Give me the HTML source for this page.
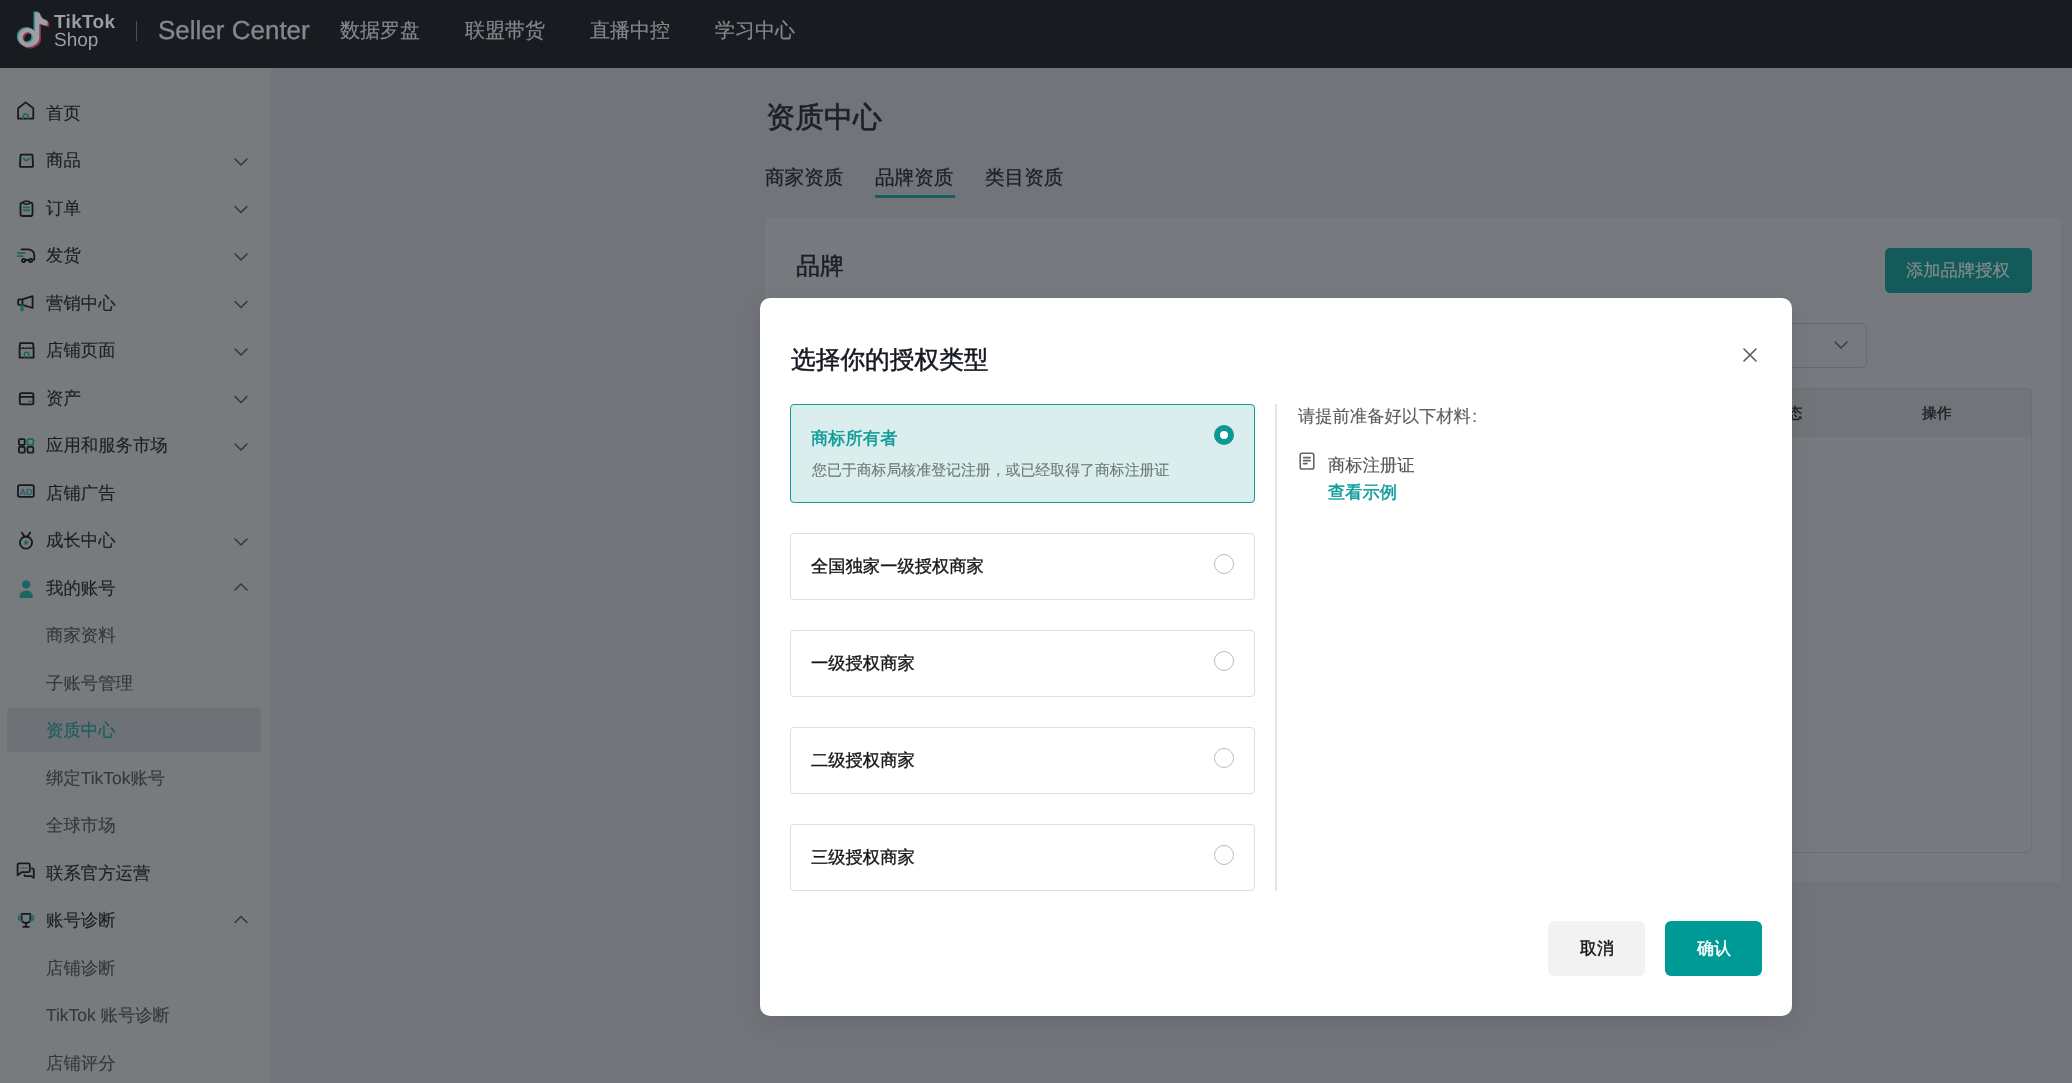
<!DOCTYPE html>
<html><head><meta charset="utf-8">
<style>
*{margin:0;padding:0;box-sizing:border-box}
html,body{width:2072px;height:1083px;overflow:hidden}
body{font-family:"Liberation Sans",sans-serif;background:#717479;position:relative;will-change:transform;text-rendering:geometricPrecision}
.a{position:absolute;white-space:nowrap}
.nav{font-size:20px;color:#84878c;top:19px;line-height:24px;-webkit-text-stroke:0.2px #84878c}
.it{left:46px;font-size:17.4px;line-height:20px;color:#1b1e22;-webkit-text-stroke:0.12px #1b1e22}
.sub{color:#34373c;-webkit-text-stroke:0.1px #34373c}
.opt{position:absolute;left:790px;width:465px;height:67px;border:1px solid #dedede;border-radius:4px;background:#fff}
.ot{position:absolute;left:811px;font-size:17.3px;line-height:20px;color:#161616;-webkit-text-stroke:0.35px #161616}
.radio{position:absolute;left:1214px;width:20px;height:20px;border-radius:50%;border:1px solid #bcbcbc}
</style></head><body>
<!-- header -->
<div class="a" style="left:0;top:0;width:2072px;height:68px;background:#181b1f"></div>
<svg class="a" style="left:0;top:0" width="130" height="68" viewBox="0 0 130 68">
  <defs><g id="tk">
    <circle cx="27.8" cy="37.6" r="7.3" fill="none" stroke-width="4.5"/>
    <path d="M35,12.6 H39.4 Q40.6,19.6 47.6,20.8 V25.6 Q42.6,25.4 39.4,23.4 V37.6 A11.6,9.55 0 0 1 27.8,47.15 V42.6 A5,5 0 0 0 35,37.6 Z" stroke="none"/>
  </g></defs>
  <g fill="#3b8f90" stroke="#3b8f90" transform="translate(-1.5,-1.1)"><use href="#tk"/></g>
  <g fill="#8e3049" stroke="#8e3049" transform="translate(1.6,1.3)"><use href="#tk"/></g>
  <g fill="#9c9fa3" stroke="#9c9fa3"><use href="#tk"/></g>
</svg>
<div class="a" style="left:54px;top:12px;font-size:19px;line-height:22px;font-weight:700;color:#9b9ea3;letter-spacing:0.3px">TikTok</div>
<div class="a" style="left:54px;top:30px;font-size:19px;line-height:22px;color:#9b9ea3">Shop</div>
<div class="a" style="left:136px;top:21px;width:1px;height:20px;background:#4d5055"></div>
<div class="a" style="left:158px;top:14px;font-size:26px;line-height:32px;color:#84878c;-webkit-text-stroke:0.35px #84878c">Seller Center</div>
<div class="a nav" style="left:340px">数据罗盘</div>
<div class="a nav" style="left:465px">联盟带货</div>
<div class="a nav" style="left:590px">直播中控</div>
<div class="a nav" style="left:715px">学习中心</div>

<!-- sidebar -->
<div class="a" style="left:0;top:68px;width:271px;height:1015px;background:#787b7d"></div>
<div class="a" style="left:7px;top:708px;width:254px;height:44px;background:#6e7176;border-radius:4px"></div>
<svg class="a" style="left:0;top:0" width="271" height="1083" viewBox="0 0 271 1083" fill="none" stroke-linecap="round" stroke-linejoin="round">
  <g stroke="#16191d" stroke-width="1.8">
    <!-- house -->
    <path d="M18.1,109 Q18.1,108.2 18.7,107.7 L25.7,102.4 L32.7,107.7 Q33.3,108.2 33.3,109 V118.7 H18.1 Z"/>
    <!-- bag -->
    <path d="M21.2,154.7 H31.8 Q32.4,154.7 32.5,155.4 L33,166.2 Q33,166.9 32.3,166.9 H20.7 Q20,166.9 20,166.2 L20.5,155.4 Q20.6,154.7 21.2,154.7 Z"/>
    <!-- clipboard -->
    <rect x="20.5" y="202.6" width="12" height="13.4" rx="2"/><rect x="23.6" y="201.2" width="5.8" height="2.8" rx="1.2" fill="#787b7d" stroke-width="1.5"/>
    <!-- truck -->
    <path d="M21.5,249.4 H28.8 Q34.3,250.5 34.3,255.5 V259.6 H32.3"/>
    <circle cx="23.6" cy="260.4" r="1.6"/><circle cx="30.6" cy="260.4" r="1.6"/>
    <path d="M25.2,260 H29"/>
    <!-- megaphone -->
    <rect x="18.2" y="299.4" width="4.2" height="5.4" rx="0.8"/><path d="M22.4,299.4 L32.6,296.2 V308 L22.4,304.8"/>
    <!-- store -->
    <path d="M20.2,343.2 H32.8 L33.6,347.6 V357.6 H19.6 V347.6 Z"/>
    <path d="M19.8,347.6 Q21.6,349.4 23.3,347.6 Q25,349.4 26.7,347.6 Q28.4,349.4 30,347.6 Q31.8,349.4 33.4,347.6" stroke-width="1.2"/>
    <!-- wallet -->
    <rect x="19.8" y="393.2" width="13.6" height="11.2" rx="1.6"/>
    <path d="M19.8,396.8 H33.4"/>
    <!-- grid -->
    <rect x="18.9" y="439.1" width="5.8" height="5.8" rx="1"/>
    <rect x="18.9" y="446.8" width="5.8" height="5.8" rx="1"/>
    <rect x="27.5" y="446.8" width="5.8" height="5.8" rx="1"/>
    <!-- AD -->
    <rect x="18" y="485.2" width="15.8" height="11.6" rx="1.6"/>
    <!-- medal -->
    <circle cx="26" cy="542.6" r="6.1"/>
    <path d="M21.8,532.6 L24.6,536.8 M30.2,532.6 L27.4,536.8"/>
    <!-- chat -->
    <path d="M19,863.4 H28.4 Q29.8,863.4 29.8,864.8 V870.8 Q29.8,872.2 28.4,872.2 H21.6 L17.6,875.4 V864.8 Q17.6,863.4 19,863.4 Z"/>
    <path d="M32,868.4 Q33.8,868.4 33.8,870 V877.8 L31.2,876.2 H25.6 Q24.6,876.2 24.4,874.8" />
    <!-- trophy -->
    <path d="M21.6,913.9 H30.4 V918.8 Q30.4,923 26,923 Q21.6,923 21.6,918.8 Z"/>
    <path d="M26,923 V926.8 M23.2,926.8 H28.8"/>
  </g>
  <g stroke="#1c6562" stroke-width="1.8">
    <path d="M23.3,118.6 V116.4 a2.4,2.4 0 0 1 4.8,0 V118.6" stroke-width="1.6"/>
    <path d="M23.6,158.4 Q26.5,162.6 29.4,158.4"/>
    <path d="M23.8,207.4 H29.2 M23.8,210.4 H29.2"/>
    <path d="M18,253.2 H24.5 M17.8,256.2 H22.6"/>
    <path d="M20.8,305 L21.6,310.6 H22.9 L22.5,305" stroke-width="1.5"/>
    <path d="M24.6,357.4 V352.6 H28.6 V357.4" stroke-width="1.5"/>
    <path d="M28.6,401.4 H31" stroke-width="1.5"/>
    <rect x="27.5" y="439.1" width="5.8" height="5.8" rx="1"/>
    <path d="M22.6,863.9 H22.7 M24.3,867.8 H24.4" stroke-width="0"/>
    <path d="M21.6,915.2 Q18.2,915.2 18.4,918 Q18.8,920.4 21.8,920.6 M30.4,915.2 Q33.8,915.2 33.6,918 Q33.2,920.4 30.2,920.6" stroke-width="1.6"/>
  </g>
  <g fill="#1c6562" stroke="none">
    <path d="M26,539.6 L26.9,541.5 L29,541.7 L27.4,543.1 L27.9,545.2 L26,544.1 L24.1,545.2 L24.6,543.1 L23,541.7 L25.1,541.5 Z"/>
    <circle cx="26.2" cy="584.4" r="4.2"/>
    <path d="M19.4,598 Q19.6,590.4 26.2,590.4 Q32.8,590.4 33,598 Z"/>
    <circle cx="21.2" cy="868" r="0.9"/><circle cx="23.7" cy="868" r="0.9"/><circle cx="26.2" cy="868" r="0.9"/>
  </g>
  <text x="25.9" y="494.6" font-family="Liberation Sans" font-weight="700" font-size="9" fill="#1c6562" text-anchor="middle" letter-spacing="-0.2">AD</text>
  <g stroke="#36393e" stroke-width="1.6">
    <path d="M235,159 L241,165 L247,159"/>
    <path d="M235,206.5 L241,212.5 L247,206.5"/>
    <path d="M235,254 L241,260 L247,254"/>
    <path d="M235,301.5 L241,307.5 L247,301.5"/>
    <path d="M235,349 L241,355 L247,349"/>
    <path d="M235,396.5 L241,402.5 L247,396.5"/>
    <path d="M235,444 L241,450 L247,444"/>
    <path d="M235,539 L241,545 L247,539"/>
    <path d="M235,590 L241,584 L247,590"/>
    <path d="M235,922.5 L241,916.5 L247,922.5"/>
  </g>
</svg>
<div class="a it" style="top:102.75px">首页</div>
<div class="a it" style="top:150.25px">商品</div>
<div class="a it" style="top:197.75px">订单</div>
<div class="a it" style="top:245.25px">发货</div>
<div class="a it" style="top:292.75px">营销中心</div>
<div class="a it" style="top:340.25px">店铺页面</div>
<div class="a it" style="top:387.75px">资产</div>
<div class="a it" style="top:435.25px">应用和服务市场</div>
<div class="a it" style="top:482.75px">店铺广告</div>
<div class="a it" style="top:530.25px">成长中心</div>
<div class="a it" style="top:577.75px">我的账号</div>
<div class="a it sub" style="top:625.25px">商家资料</div>
<div class="a it sub" style="top:672.75px">子账号管理</div>
<div class="a it sub" style="top:720.25px;color:#1b5e5e;-webkit-text-stroke:0.2px #1b5e5e">资质中心</div>
<div class="a it sub" style="top:767.75px">绑定TikTok账号</div>
<div class="a it sub" style="top:815.25px">全球市场</div>
<div class="a it" style="top:862.75px">联系官方运营</div>
<div class="a it" style="top:910.25px">账号诊断</div>
<div class="a it sub" style="top:957.75px">店铺诊断</div>
<div class="a it sub" style="top:1005.25px">TikTok 账号诊断</div>
<div class="a it sub" style="top:1052.75px">店铺评分</div>

<!-- page content -->
<div class="a" style="left:766px;top:100px;font-size:29px;line-height:36px;color:#1c1f24;-webkit-text-stroke:0.6px #1c1f24">资质中心</div>
<div class="a" style="left:765px;top:166px;font-size:19.6px;line-height:24px;color:#1c1f24;-webkit-text-stroke:0.25px #1c1f24">商家资质</div>
<div class="a" style="left:875px;top:166px;font-size:19.6px;line-height:24px;color:#1c1f24;-webkit-text-stroke:0.25px #1c1f24">品牌资质</div>
<div class="a" style="left:985px;top:166px;font-size:19.6px;line-height:24px;color:#1c1f24;-webkit-text-stroke:0.25px #1c1f24">类目资质</div>
<div class="a" style="left:875px;top:195px;width:80px;height:3px;background:#185d5f"></div>
<div class="a" style="left:765px;top:217px;width:1296px;height:665px;background:#76797d;border-radius:3px"></div>
<div class="a" style="left:796px;top:253px;font-size:24px;line-height:28px;color:#1c1f24;-webkit-text-stroke:0.5px #1c1f24">品牌</div>
<div class="a" style="left:1885px;top:248px;width:147px;height:45px;background:#135a5b;border-radius:5px"></div>
<div class="a" style="left:1906px;top:259.5px;font-size:17.3px;line-height:21px;color:#868b8c;-webkit-text-stroke:0.2px #868b8c">添加品牌授权</div>
<div class="a" style="left:1500px;top:323px;width:367px;height:45px;border:1px solid #66696d;border-radius:5px"></div>
<svg class="a" style="left:1830px;top:338px" width="22" height="14" viewBox="0 0 22 14" fill="none"><path d="M5,4 L11,10 L17,4" stroke="#3c3f44" stroke-width="1.6" stroke-linecap="round" stroke-linejoin="round"/></svg>
<div class="a" style="left:795px;top:388px;width:1237px;height:465px;border:1px solid #6c6f73;border-radius:5px"></div>
<div class="a" style="left:796px;top:389px;width:1235px;height:48px;background:#717478;border-radius:4px 4px 0 0"></div>
<div class="a" style="left:1922px;top:405px;font-size:14.8px;line-height:18px;color:#1c1f24;-webkit-text-stroke:0.4px #1c1f24">操作</div>
<div class="a" style="left:1773px;top:405px;font-size:14.8px;line-height:18px;color:#1c1f24;-webkit-text-stroke:0.4px #1c1f24">状态</div>

<!-- modal -->
<div class="a" style="left:760px;top:298px;width:1032px;height:718px;background:#fff;border-radius:10px;box-shadow:0 6px 24px rgba(0,0,0,0.09)"></div>
<div class="a" style="left:791px;top:346px;font-size:24.7px;line-height:30px;color:#161823;-webkit-text-stroke:0.5px #161823">选择你的授权类型</div>
<svg class="a" style="left:1738px;top:343px" width="24" height="24" viewBox="0 0 24 24"><path d="M6,6 L18,18 M18,6 L6,18" stroke="#5a5a5a" stroke-width="1.6" stroke-linecap="round"/></svg>

<div class="opt" style="top:404px;height:99px;border:1.5px solid #169c98;background:#d9eeed"></div>
<div class="ot" style="top:428px;color:#0e9a96;-webkit-text-stroke:0.45px #0e9a96">商标所有者</div>
<div class="a" style="left:812px;top:463px;font-size:14.9px;line-height:17px;color:#6d7777;-webkit-text-stroke:0.1px #6d7777">您已于商标局核准登记注册，或已经取得了商标注册证</div>
<div class="radio" style="top:425px;border:6.2px solid #0c9893;background:#fff"></div>

<div class="opt" style="top:533px"></div><div class="ot" style="top:556px">全国独家一级授权商家</div><div class="radio" style="top:554px"></div>
<div class="opt" style="top:630px"></div><div class="ot" style="top:653px">一级授权商家</div><div class="radio" style="top:651px"></div>
<div class="opt" style="top:727px"></div><div class="ot" style="top:750px">二级授权商家</div><div class="radio" style="top:748px"></div>
<div class="opt" style="top:824px"></div><div class="ot" style="top:847px">三级授权商家</div><div class="radio" style="top:845px"></div>

<div class="a" style="left:1275px;top:404px;width:2px;height:487px;background:#e4e4e4"></div>
<div class="a" style="left:1298px;top:406px;font-size:17.3px;line-height:20px;color:#5f5f5f;-webkit-text-stroke:0.15px #5f5f5f">请提前准备好以下材料<span style="margin-left:1.5px">:</span></div>
<svg class="a" style="left:1296px;top:450px" width="22" height="22" viewBox="0 0 22 22" fill="none" stroke="#666" stroke-width="1.6" stroke-linecap="round"><rect x="4.2" y="3.2" width="13.6" height="15.8" rx="1.8"/><path d="M7.6,7.6 H14.2 M7.6,10.6 H14.2 M7.6,13.6 H11"/></svg>
<div class="a" style="left:1328px;top:455px;font-size:17.3px;line-height:20px;color:#555;-webkit-text-stroke:0.15px #555">商标注册证</div>
<div class="a" style="left:1328px;top:482px;font-size:17.3px;line-height:20px;color:#0e9b98;-webkit-text-stroke:0.45px #0e9b98">查看示例</div>

<div class="a" style="left:1548px;top:921px;width:97px;height:55px;background:#f2f2f3;border-radius:6px"></div>
<div class="a" style="left:1580px;top:939px;font-size:17px;line-height:20px;color:#161616;-webkit-text-stroke:0.45px #161616">取消</div>
<div class="a" style="left:1665px;top:921px;width:97px;height:55px;background:#009a96;border-radius:6px"></div>
<div class="a" style="left:1697px;top:939px;font-size:17px;line-height:20px;color:#fff;-webkit-text-stroke:0.45px #fff">确认</div>
</body></html>
